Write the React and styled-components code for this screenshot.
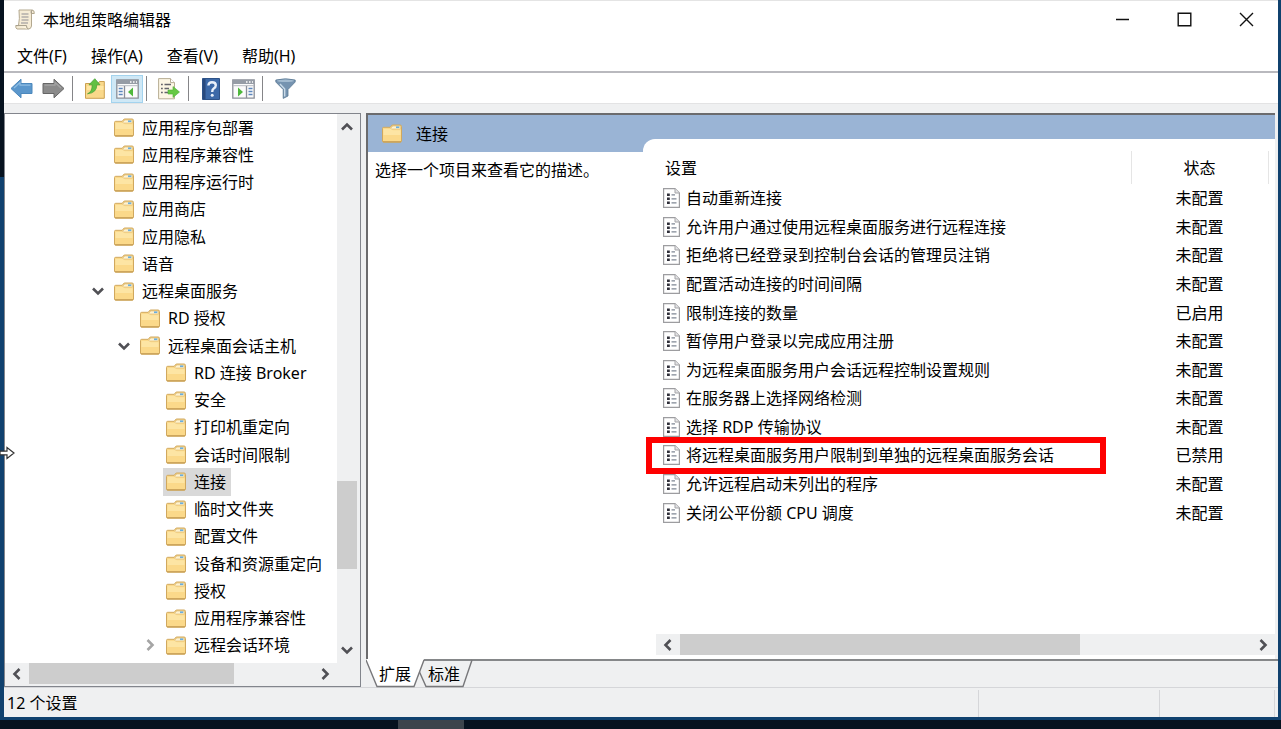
import React from "react";
import styled, { createGlobalStyle, ThemeProvider } from "styled-components";

const theme = {
  bgColors: {
    window: "#fff",
    chrome: "#eff0f1",
    thumb: "#cdcdcd",
    selected: "#d9d9d9",
    header: "#9ab4d5",
    desktop: "#10416e",
  },
  borderColors: {
    primary: "#82858c",
    dark: "#6b6b6d",
    light: "#d5d6d9",
  },
  text: {
    main: "16px",
  },
};

const treeItems = [
  { label: "应用程序包部署", level: 0 },
  { label: "应用程序兼容性", level: 0 },
  { label: "应用程序运行时", level: 0 },
  { label: "应用商店", level: 0 },
  { label: "应用隐私", level: 0 },
  { label: "语音", level: 0 },
  { label: "远程桌面服务", level: 0, arrow: "down" },
  { label: "RD 授权", level: 1 },
  { label: "远程桌面会话主机", level: 1, arrow: "down" },
  { label: "RD 连接 Broker", level: 2 },
  { label: "安全", level: 2 },
  { label: "打印机重定向", level: 2 },
  { label: "会话时间限制", level: 2 },
  { label: "连接", level: 2, selected: true },
  { label: "临时文件夹", level: 2 },
  { label: "配置文件", level: 2 },
  { label: "设备和资源重定向", level: 2 },
  { label: "授权", level: 2 },
  { label: "应用程序兼容性", level: 2 },
  { label: "远程会话环境", level: 2, arrow: "right" },
];

const settings = [
  { name: "自动重新连接", state: "未配置" },
  { name: "允许用户通过使用远程桌面服务进行远程连接", state: "未配置" },
  { name: "拒绝将已经登录到控制台会话的管理员注销", state: "未配置" },
  { name: "配置活动连接的时间间隔", state: "未配置" },
  { name: "限制连接的数量", state: "已启用" },
  { name: "暂停用户登录以完成应用注册", state: "未配置" },
  { name: "为远程桌面服务用户会话远程控制设置规则", state: "未配置" },
  { name: "在服务器上选择网络检测", state: "未配置" },
  { name: "选择 RDP 传输协议", state: "未配置" },
  {
    name: "将远程桌面服务用户限制到单独的远程桌面服务会话",
    state: "已禁用",
    marked: true,
  },
  { name: "允许远程启动未列出的程序", state: "未配置" },
  { name: "关闭公平份额 CPU 调度", state: "未配置" },
];

const chevrons = {
  up: "M2 9.5 L7 4.5 L12 9.5",
  down: "M2 4.5 L7 9.5 L12 4.5",
  left: "M9.5 2 L4.5 7 L9.5 12",
  right: "M4.5 2 L9.5 7 L4.5 12",
};

const Chevron = ({ dir, color = "#505055" }) => (
  <svg width="14" height="14" viewBox="0 0 14 14" aria-hidden="true">
    <path d={chevrons[dir]} fill="none" stroke={color} strokeWidth="2.6" />
  </svg>
);

const FolderIcon = () => (
  <svg width="20" height="19" viewBox="0 0 20 19" aria-hidden="true">
    <path
      d="M.5 4.5 Q.5 3.3 1.7 3.3 H8.2 L10.2 1 H18 Q19.5 1 19.5 2.5 V17 Q19.5 18.2 18 18.2 H1.8 Q.5 18.2 .5 17 Z"
      fill="#fbd98a"
      stroke="#d0a85e"
    />
    <path d="M1.5 5 H8.8 L10.8 6.3 H18.5 V11 H1.5 Z" fill="#fde5a4" />
    <path d="M10.8 2 H18.3 V5 H9.6 L8.8 4.2 Z" fill="#fff3cf" stroke="#d9b978" strokeWidth=".6" />
    <path d="M14 2.4 H17.3 V4.1 H14 Z" fill="#6aaede" />
    <path d="M1 17.8 H19" stroke="#c0984f" />
  </svg>
);

const PolicyIcon = () => (
  <svg width="17" height="20" viewBox="0 0 17 20" aria-hidden="true">
    <path d="M.6 .6 H12 L16.4 5 V19.3 H.6 Z" fill="#fff" stroke="#9d9da0" strokeWidth="1.2" />
    <path d="M12 .6 V5 H16.4" fill="#e4e4e6" stroke="#a5a5a8" />
    <path d="M4 5.5 H6.8 V8 H4 Z M4 9.5 H6.8 V12 H4 Z M4 13.5 H6.8 V16 H4 Z" fill="#2e2e38" />
    <path d="M8.5 6.8 H12 M8.5 10.8 H13.5 M8.5 14.8 H13.5" stroke="#7f8794" strokeWidth="1.2" />
  </svg>
);

const ScrollIcon = () => (
  <svg width="20" height="21" viewBox="0 0 20 21" aria-hidden="true">
    <path
      d="M4 1 H17 Q19.5 1 19.3 4.5 H16.5 V17 Q16 20 13.5 20 H2 Q.5 19.5 .8 16.5 H3.5 Q5 10 4 1 Z"
      fill="#f6ecd6"
      stroke="#b3a88f"
    />
    <path d="M16.3 4.5 Q15.5 1.6 17.3 1.3" fill="none" stroke="#8a8272" />
    <path d="M.9 16.6 H11.5 Q11.2 19.5 13.5 19.9" fill="#fff6e0" stroke="#a39b88" />
    <path d="M6.5 5 H13.5 M6.5 8 H13.5 M6.5 11 H13.5 M6 14 H13" stroke="#8f8d94" strokeWidth="1.2" />
  </svg>
);

const ArrowIcon = ({ forward }) => (
  <svg width="23" height="21" viewBox="0 0 23 21" aria-hidden="true">
    <g transform={forward ? "translate(23 0) scale(-1 1)" : undefined}>
      <path
        d="M1 10.5 L11 1.2 V5.5 H22 V15.5 H11 V19.8 Z"
        fill={forward ? "#8b8b8b" : "#5b97cc"}
        stroke={forward ? "#666" : "#4c88bd"}
        strokeLinejoin="round"
      />
      <path
        d="M4 10 L10 4.5 V7.2 H20.5"
        fill="none"
        stroke={forward ? "#a5a5a5" : "#8fbde2"}
        strokeWidth="1.2"
      />
    </g>
  </svg>
);

const FolderUpIcon = () => (
  <svg width="20" height="21" viewBox="0 0 20 21" aria-hidden="true">
    <path d="M.5 5.5 H13 L14.5 3.5 H19.3 V20.3 H.5 Z" fill="#f9d88a" stroke="#cba050" />
    <path d="M2 8 H18.5 V12 H2 Z" fill="#ffe6a2" />
    <path
      d="M2.5 15.8 Q7.2 14 7.2 6.8 H4 L9.8 .7 L15 6.8 H11.8 Q12 14.8 2.5 15.8 Z"
      fill="#61c043"
      stroke="#409d33"
      strokeWidth=".7"
    />
  </svg>
);

const PaneIcon = ({ right }) => (
  <svg width="23" height="20" viewBox="0 0 23 20" aria-hidden="true">
    <path d="M.8 .8 H22.2 V19.2 H.8 Z" fill="#fbfbfb" stroke="#8b8f98" strokeWidth="1.3" />
    <path d="M1 1 H22 V5 H1 Z" fill="#969ca6" />
    <path d="M14 3 H15.5 M17 3 H18.5 M20 3 H21" stroke="#fff" strokeWidth="1.4" />
    <path d="M1 6.7 H22" stroke="#b7bbc2" />
    {right ? (
      <>
        <path d="M14.5 7 V19" stroke="#8b8f98" strokeWidth="1.3" />
        <path d="M16.5 9.5 H20.5 M16.5 12.5 H20.5 M16.5 15.5 H20.5" stroke="#5d86bd" strokeWidth="1.3" />
        <path d="M6 8.5 L11 13 L6 17.5 Z" fill="#4fb83c" />
      </>
    ) : (
      <>
        <path d="M8.5 7 V19" stroke="#8b8f98" strokeWidth="1.3" />
        <path d="M2.7 9.5 H6.7 M2.7 12.5 H6.7 M2.7 15.5 H6.7" stroke="#5d86bd" strokeWidth="1.3" />
        <path d="M17 8.5 L12 13 L17 17.5 Z" fill="#4fb83c" />
      </>
    )}
  </svg>
);

const ExportIcon = () => (
  <svg width="22" height="22" viewBox="0 0 22 22" aria-hidden="true">
    <path d="M.6 .6 H12.5 L16.5 4.6 V20.8 H.6 Z" fill="#fdf7e4" stroke="#b8ae94" />
    <path d="M12.5 .6 V4.6 H16.5" fill="#fff" stroke="#b8ae94" />
    <path
      d="M3 6.5 H4.8 M3 10.5 H4.8 M3 14.5 H4.8 M6.5 6.5 H13 M6.5 10.5 H11 M6.5 14.5 H10"
      stroke="#65656b"
      strokeWidth="1.5"
    />
    <path d="M10 12 H15 V8.5 L21.5 14 L15 19.5 V16 H10 Z" fill="#66c943" stroke="#4daf36" strokeWidth=".6" />
  </svg>
);

const HelpIcon = () => (
  <svg width="18" height="22" viewBox="0 0 18 22" aria-hidden="true">
    <path d="M.5 .5 H17.5 V21.5 H.5 Z" fill="#3c69a8" stroke="#2d5288" />
    <path d="M1 1 H3.5 V21 H1 Z" fill="#28497d" />
    <path
      d="M6.4 7.6 Q6.4 4.2 10 4.2 Q13.8 4.2 13.8 7.3 Q13.8 9.3 11.7 10.6 Q10.2 11.6 10.2 14"
      fill="none"
      stroke="#e8f0fa"
      strokeWidth="2.4"
    />
    <circle cx="10.2" cy="17.2" r="1.5" fill="#e8f0fa" />
  </svg>
);

const FunnelIcon = () => (
  <svg width="21" height="21" viewBox="0 0 21 21" aria-hidden="true">
    <path
      d="M.8 2 Q10.5 -.4 20.2 2 V4 L13 11.5 V18 L8.2 20.4 V11.5 L.8 4 Z"
      fill="#7593b0"
      stroke="#5b7893"
      strokeWidth=".8"
    />
    <ellipse cx="10.5" cy="2.8" rx="8.6" ry="1.3" fill="#a3bbd0" />
    <path d="M5 6 L9.7 11 V18.5" fill="none" stroke="#c9dae8" strokeWidth="1.4" />
  </svg>
);

const VerticalScroll = () => (
  <VBar>
    <ScrollButton aria-label="向上滚动">
      <Chevron dir="up" />
    </ScrollButton>
    <Space $share={340} />
    <Thumb $share={88} />
    <Space $share={68} />
    <ScrollButton aria-label="向下滚动">
      <Chevron dir="down" />
    </ScrollButton>
  </VBar>
);

const HorizontalScroll = ({ size, after, className }) => (
  <HBar className={className}>
    <ScrollButton aria-label="向左滚动">
      <Chevron dir="left" />
    </ScrollButton>
    <Thumb $share={size} />
    <Space $share={after} />
    <ScrollButton aria-label="向右滚动">
      <Chevron dir="right" />
    </ScrollButton>
  </HBar>
);

const TitleBar = () => (
  <Title>
    <ScrollIcon />
    <TitleText>本地组策略编辑器</TitleText>
    <WindowButton aria-label="最小化">
      <svg width="15" height="15" viewBox="0 0 15 15">
        <path d="M1 7.5 H14" stroke="#111" strokeWidth="1.5" />
      </svg>
    </WindowButton>
    <WindowButton aria-label="最大化">
      <svg width="15" height="15" viewBox="0 0 15 15">
        <path d="M1.2 1.2 H13.8 V13.8 H1.2 Z" fill="none" stroke="#111" strokeWidth="1.4" />
      </svg>
    </WindowButton>
    <WindowButton aria-label="关闭">
      <svg width="15" height="15" viewBox="0 0 15 15">
        <path d="M1 1 L14 14 M14 1 L1 14" stroke="#111" strokeWidth="1.4" />
      </svg>
    </WindowButton>
  </Title>
);

const Toolbar = () => (
  <ToolRow>
    <ToolButton aria-label="后退">
      <ArrowIcon />
    </ToolButton>
    <ToolButton aria-label="前进">
      <ArrowIcon forward />
    </ToolButton>
    <ToolDivider />
    <ToolButton aria-label="上一级">
      <FolderUpIcon />
    </ToolButton>
    <ToolButton aria-label="显示/隐藏控制台树" $active>
      <PaneIcon />
    </ToolButton>
    <ToolDivider />
    <ToolButton aria-label="导出列表">
      <ExportIcon />
    </ToolButton>
    <ToolDivider />
    <ToolButton aria-label="帮助">
      <HelpIcon />
    </ToolButton>
    <ToolButton aria-label="显示/隐藏操作窗格">
      <PaneIcon right />
    </ToolButton>
    <ToolDivider />
    <ToolButton aria-label="筛选器">
      <FunnelIcon />
    </ToolButton>
  </ToolRow>
);

const TreePanel = () => (
  <TreeFrame>
    <TreeBody>
      <Tree>
        {treeItems.map((item, i) => (
          <TreeRow key={i} $level={item.level}>
            <Expander>
              {item.arrow && (
                <Chevron dir={item.arrow} color={item.arrow === "right" ? "#a5a5a5" : undefined} />
              )}
            </Expander>
            <TreeItem $selected={item.selected}>
              <FolderIcon />
              {item.label}
            </TreeItem>
          </TreeRow>
        ))}
      </Tree>
      <VerticalScroll />
    </TreeBody>
    <TreeScroll size={204} after={78} />
  </TreeFrame>
);

const DetailPanel = () => (
  <Detail>
    <DetailFrame>
      <Description>
        <DetailHeader>
          <FolderIcon />
          连接
        </DetailHeader>
        <DescriptionText>选择一个项目来查看它的描述。</DescriptionText>
      </Description>
      <ListSide>
        <ListArea>
          <Table>
            <thead>
              <tr>
                <HeadCell>设置</HeadCell>
                <HeadCell $state>状态</HeadCell>
                <EndCell />
              </tr>
            </thead>
            <tbody>
              {settings.map((s) => (
                <tr key={s.name}>
                  <Cell>
                    {s.marked && <Mark />}
                    <Setting>
                      <PolicyIcon />
                      {s.name}
                    </Setting>
                  </Cell>
                  <Cell $state>{s.state}</Cell>
                  <EndCell />
                </tr>
              ))}
            </tbody>
          </Table>
          <ListScroll size={401} after={172} />
        </ListArea>
      </ListSide>
    </DetailFrame>
    <Tabs>
      <TabShape width="108" height="30" viewBox="0 0 108 30" aria-hidden="true">
        <path d="M0 0 H58 L48 28 H11 Z" fill="#fff" />
        <path d="M0 1 L11 27.5 H48 L58 1" fill="none" stroke="#77777a" strokeWidth="1.4" />
        <path d="M53.5 13 L60 27.5 H97 L106 1" fill="none" stroke="#77777a" strokeWidth="1.4" />
      </TabShape>
      <Tab>扩展</Tab>
      <Tab>标准</Tab>
    </Tabs>
  </Detail>
);

const App = () => {
  return (
    <ThemeProvider theme={theme}>
      <GlobalStyle />
      <Desktop>
        <Window>
          <TitleBar />
          <Menu>
            <MenuButton>文件(F)</MenuButton>
            <MenuButton>操作(A)</MenuButton>
            <MenuButton>查看(V)</MenuButton>
            <MenuButton>帮助(H)</MenuButton>
          </Menu>
          <Toolbar />
          <Main>
            <TreePanel />
            <DetailPanel />
          </Main>
          <StatusBar>
            <StatusText>12 个设置</StatusText>
            <StatusCell $width={181} />
            <StatusCell $width={115} />
            <StatusCell $width={4} />
          </StatusBar>
        </Window>
        <Taskbar>
          <TaskButton />
        </Taskbar>
        <Pointer width="16" height="16" viewBox="0 0 16 16" aria-hidden="true">
          <path d="M0 6.2 H7 V2.5 L14 8 L7 13.5 V9.8 H0 Z" fill="#fff" stroke="#333" strokeWidth="1.2" />
        </Pointer>
      </Desktop>
    </ThemeProvider>
  );
};

export default App;

const GlobalStyle = createGlobalStyle`
  * {
    box-sizing: border-box;
  }
  body {
    margin: 0;
    color: #000;
    font-family: "Noto Sans", "Noto Sans CJK SC", sans-serif;
    font-size: ${theme.text.main};
    line-height: 24px;
  }
  button {
    margin: 0;
    padding: 0;
    border: 0;
    background: none;
    color: inherit;
    font: inherit;
  }
  svg {
    display: block;
    flex-shrink: 0;
  }
`;

const Desktop = styled.div`
  position: relative;
  display: flex;
  flex-direction: column;
  min-height: 100vh;
  padding: 0 3px 0 4px;
  background: linear-gradient(
    90deg,
    transparent 50%,
    ${({ theme }) => theme.bgColors.desktop} 50%
  ),
  linear-gradient(#06121f 177px, ${({ theme }) => theme.bgColors.desktop} 177px);
`;

const Window = styled.div`
  flex: 1;
  display: flex;
  flex-direction: column;
  min-width: 0;
  background: ${({ theme }) => theme.bgColors.window};
  border-top: 1px solid #e4e4e4;
`;

const Title = styled.header`
  display: flex;
  align-items: center;
  height: 37px;
  padding: 0 1px 0 11px;
`;
const TitleText = styled.h1`
  flex: 1;
  margin: 0 0 0 8px;
  font-size: ${({ theme }) => theme.text.main};
  font-weight: 400;
`;
const WindowButton = styled.button`
  display: flex;
  align-items: center;
  justify-content: center;
  width: 62px;
  height: 37px;
`;

const Menu = styled.nav`
  display: flex;
  align-items: center;
  gap: 24px;
  height: 35px;
  padding: 3px 0 0 13px;
  border-bottom: 2px solid #b9b9be;
`;
const MenuButton = styled.button`
  white-space: nowrap;
`;

const ToolRow = styled.div`
  display: flex;
  align-items: center;
  height: 31px;
  padding: 1px 0 0 1px;
  border-bottom: 1px solid #e3e3e4;
`;
const ToolButton = styled.button`
  display: flex;
  align-items: center;
  justify-content: center;
  width: 32px;
  height: 28px;
  border: 1px solid ${({ $active }) => ($active ? "#a3d3ee" : "transparent")};
  background: ${({ $active }) => ($active ? "#cfe8f6" : "none")};
`;
const ToolDivider = styled.span`
  width: 1px;
  height: 25px;
  margin: 0 6px 0 3px;
  background: #858588;
`;

const Main = styled.main`
  flex: 1;
  display: flex;
  gap: 5px;
  padding-top: 9px;
  background: ${({ theme }) => theme.bgColors.chrome};
`;

const TreeFrame = styled.section`
  display: flex;
  flex-direction: column;
  width: 357px;
  padding: 0 3px 2px 0;
  border: 1px solid ${({ theme }) => theme.borderColors.primary};
  background: ${({ theme }) => theme.bgColors.chrome};
`;
const TreeBody = styled.div`
  flex: 1;
  display: flex;
`;
const Tree = styled.ul`
  flex: 1;
  display: grid;
  grid-auto-rows: 1fr;
  margin: 0;
  padding: 0 0 4px;
  list-style: none;
  background: ${({ theme }) => theme.bgColors.window};
`;
const TreeRow = styled.li`
  display: flex;
  padding-left: ${({ $level }) => 80 + $level * 26}px;
`;
const Expander = styled.span`
  display: flex;
  align-items: center;
  justify-content: center;
  width: 26px;
`;
const TreeItem = styled.button`
  display: flex;
  align-items: center;
  gap: 8px;
  padding: 0 5px 0 3px;
  white-space: nowrap;
  background: ${({ theme, $selected }) => ($selected ? theme.bgColors.selected : "none")};
`;

const VBar = styled.div`
  display: flex;
  flex-direction: column;
  width: 20px;
  background: ${({ theme }) => theme.bgColors.chrome};
`;
const HBar = styled.div`
  display: flex;
  height: 21px;
  background: ${({ theme }) => theme.bgColors.chrome};
`;
const ScrollButton = styled.button`
  flex-shrink: 0;
  display: flex;
  align-items: center;
  justify-content: center;
  ${VBar} & {
    height: 26px;
  }
  ${HBar} & {
    width: 24px;
  }
`;
const Space = styled.div`
  flex: ${({ $share }) => $share} 0 0;
`;
const Thumb = styled(Space)`
  background: ${({ theme }) => theme.bgColors.thumb};
`;

const TreeScroll = styled(HorizontalScroll)`
  margin-right: 20px;
`;

const Detail = styled.section`
  flex: 1;
  display: flex;
  flex-direction: column;
  min-width: 0;
`;
const DetailFrame = styled.div`
  flex: 1;
  display: flex;
  margin-right: 3px;
  border-top: 2px solid ${({ theme }) => theme.borderColors.dark};
  border-left: 2px solid ${({ theme }) => theme.borderColors.dark};
  background: ${({ theme }) => theme.bgColors.window};
`;
const Description = styled.div`
  width: 275px;
`;
const DetailHeader = styled.h2`
  display: flex;
  align-items: center;
  gap: 14px;
  height: 37px;
  margin: 0;
  padding-left: 14px;
  font-size: ${({ theme }) => theme.text.main};
  font-weight: 400;
  background: ${({ theme }) => theme.bgColors.header};
`;
const DescriptionText = styled.p`
  margin: 6px 7px;
`;
const ListSide = styled.div`
  flex: 1;
  display: flex;
  min-width: 0;
  padding-top: 24px;
  background: linear-gradient(
    ${({ theme }) => theme.bgColors.header} 37px,
    ${({ theme }) => theme.bgColors.window} 37px
  );
`;
const ListArea = styled.div`
  flex: 1;
  display: flex;
  flex-direction: column;
  justify-content: space-between;
  padding-top: 12px;
  border-top-left-radius: 12px;
  background: ${({ theme }) => theme.bgColors.window};
`;
const Table = styled.table`
  width: 100%;
  height: 376px;
  border-collapse: collapse;
  table-layout: fixed;
`;
const HeadCell = styled.th`
  width: ${({ $state }) => ($state ? "137px" : "auto")};
  height: 33px;
  padding: 0 0 0 ${({ $state }) => ($state ? "0" : "22px")};
  border-right: 1px solid #e5e5e5;
  font-weight: 400;
  text-align: ${({ $state }) => ($state ? "center" : "left")};
`;
const Cell = styled.td`
  position: relative;
  padding: 0 0 0 ${({ $state }) => ($state ? "0" : "20px")};
  text-align: ${({ $state }) => ($state ? "center" : "left")};
`;
const EndCell = styled.td`
  width: 7px;
  padding: 0;
`;
const Setting = styled.div`
  display: flex;
  align-items: center;
  gap: 6px;
  white-space: nowrap;
`;
const Mark = styled.span`
  position: absolute;
  top: -4px;
  bottom: -4px;
  left: 3px;
  width: 460px;
  border: 6px solid #fe0000;
`;
const ListScroll = styled(HorizontalScroll)`
  margin: 0 0 4px 13px;
`;

const Tabs = styled.div`
  position: relative;
  display: flex;
  gap: 17px;
  height: 28px;
  padding-left: 13px;
  border-top: 2px solid #858789;
`;
const TabShape = styled.svg`
  position: absolute;
  top: -2px;
  left: 0;
`;
const Tab = styled.button`
  position: relative;
`;

const StatusBar = styled.footer`
  display: flex;
  height: 30px;
  border-top: 1px solid ${({ theme }) => theme.borderColors.light};
  background: ${({ theme }) => theme.bgColors.chrome};
`;
const StatusText = styled.span`
  flex: 1;
  padding: 3px;
`;
const StatusCell = styled.span`
  width: ${({ $width }) => $width}px;
  margin-top: 2px;
  border-left: 1px solid ${({ theme }) => theme.borderColors.light};
`;

const Taskbar = styled.div`
  height: 12px;
  margin: 0 -3px 0 -4px;
  padding-left: 398px;
  border-top: 3px solid ${({ theme }) => theme.bgColors.desktop};
  background: #06121f;
`;
const TaskButton = styled.div`
  width: 66px;
  height: 9px;
  background: #3c444c;
`;

const Pointer = styled.svg`
  position: absolute;
  top: 445px;
  left: 0;
`;
